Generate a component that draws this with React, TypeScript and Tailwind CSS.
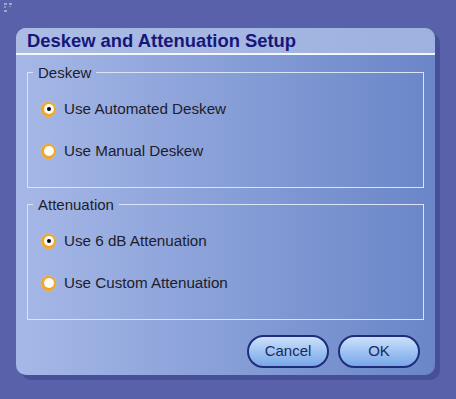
import React from "react";

function Radio({ checked }: { checked: boolean }) {
  return (
    <div className="w-[15px] h-[15px] rounded-full bg-[#f0a52c] shadow-[0_0_1.5px_#f7c870] flex items-center justify-center shrink-0">
      <div className="w-[10px] h-[10px] rounded-full bg-[#fdfdf8] flex items-center justify-center">
        {checked && <div className="w-[4px] h-[4px] rounded-full bg-black" />}
      </div>
    </div>
  );
}

function Group({ label, options, checked, className }: { label: string; options: string[]; checked: number; className?: string }) {
  return (
    <fieldset className={"border border-[#dbe3f6] pl-[13px] pt-[7px] pb-[15px] " + (className ?? "")}>
      <legend className="ml-[-8px] px-[5px] text-[15px] leading-[17px] text-[#1d1d2b]">{label}</legend>
      {options.map((o, i) => (
        <div key={o} className="h-[42px] flex items-center">
          <Radio checked={i === checked} />
          <span className="ml-[8px] text-[15.2px] text-[#1d1d2b]">{o}</span>
        </div>
      ))}
    </fieldset>
  );
}

function Btn({ children }: { children: React.ReactNode }) {
  return (
    <button className="w-[82px] h-[33px] rounded-full border-2 border-[#1e2d7a] bg-gradient-to-b from-[#cde1fb] via-[#9fc3f2] to-[#7aa6e8] text-[15px] text-[#1b2a5c] flex items-center justify-center">
      {children}
    </button>
  );
}

export default function App() {
  return (
    <div
      className="relative w-[456px] h-[399px] bg-[#5861a9] pl-[16px] pt-[28px]"
      style={{ fontFamily: '"Liberation Sans", Arial, sans-serif' }}
    >
      <svg className="absolute left-[3px] top-[3px]" width="12" height="12" viewBox="0 0 12 12">
        <rect x="1" y="0" width="3" height="2" fill="#9ea6cf" />
        <rect x="6" y="0" width="3" height="2" fill="#9ea6cf" />
        <rect x="1" y="3" width="2" height="2" fill="#8c94c4" />
        <rect x="6" y="3" width="2" height="1" fill="#8c94c4" />
        <rect x="1" y="7" width="3" height="2" fill="#9ea6cf" />
      </svg>
      <div className="w-[419px] h-[347px] rounded-[10px] shadow-[5px_5px_0_#474f97] overflow-hidden flex flex-col bg-gradient-to-r from-[#a6b8e7] to-[#6a86c8]">
        <div className="h-[27px] shrink-0 bg-gradient-to-r from-[#abbce4] to-[#9eb1df] border-b-2 border-[#f4f7ff] pl-[11px] flex items-center text-[18.4px] font-bold text-[#17177a]">
          Deskew and Attenuation Setup
        </div>
        <div className="flex-1 px-[11px] pt-[9px] flex flex-col">
          <Group label="Deskew" options={["Use Automated Deskew", "Use Manual Deskew"]} checked={0} />
          <Group
            label="Attenuation"
            options={["Use 6 dB Attenuation", "Use Custom Attenuation"]}
            checked={0}
            className="mt-[8px]"
          />
          <div className="flex justify-end gap-[9px] mt-[15px] pr-[4px]">
            <Btn>Cancel</Btn>
            <Btn>OK</Btn>
          </div>
        </div>
      </div>
    </div>
  );
}
